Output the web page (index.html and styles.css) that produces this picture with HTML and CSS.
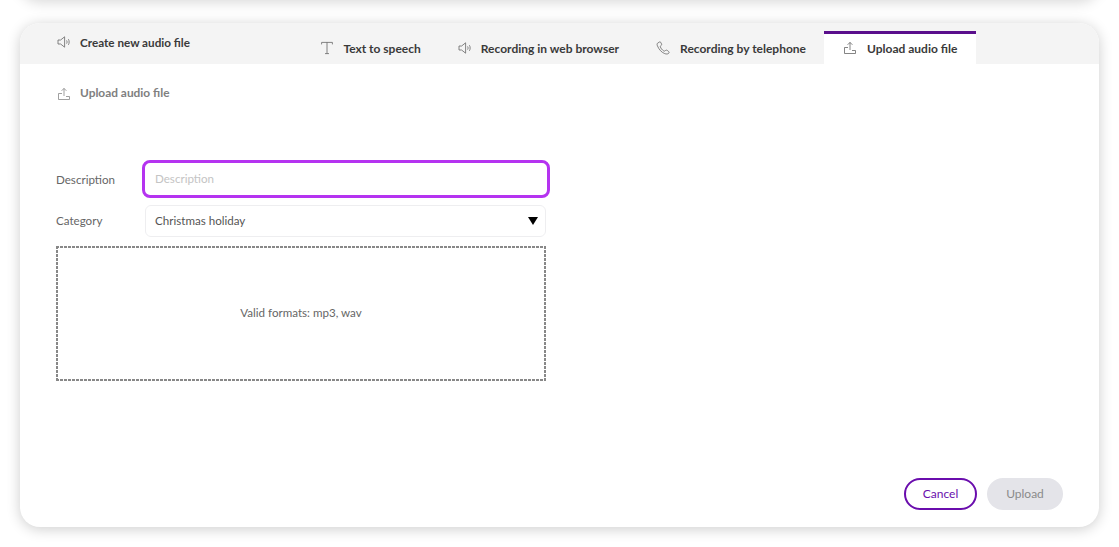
FILE: index.html
```html
<!DOCTYPE html>
<html lang="en">
<head>
<meta charset="utf-8">
<title>Upload audio file</title>
<link rel="stylesheet" href="styles.css">
</head>
<body>
<div class="prev-card"></div>
<main class="card">
  <header class="head">
    <div class="head-title">
      <svg class="icon" viewBox="0 0 14 14"><path d="M1 5h2.600L7.600 1.800v10.400L3.600 9H1z"/><path d="M9.600 5.400c.6 1 .6 2.200 0 3.200M11.400 4.200c1 1.600 1 4 0 5.600"/></svg>
      <span>Create new audio file</span>
    </div>
    <nav class="tabs">
      <a class="tab tab-text">
        <svg class="icon" viewBox="0 0 14 14"><path d="M1.600 3.400V1.400h10.800v2M7 1.400v11.200M5 12.600h4"/></svg>
        <span>Text to speech</span>
      </a>
      <a class="tab tab-web">
        <svg class="icon" viewBox="0 0 14 14"><path d="M1 5h2.600L7.600 1.800v10.400L3.600 9H1z"/><path d="M9.600 5.400c.6 1 .6 2.200 0 3.200M11.400 4.200c1 1.600 1 4 0 5.600"/></svg>
        <span>Recording in web browser</span>
      </a>
      <a class="tab tab-phone">
        <svg class="icon" viewBox="0 0 14 14"><path d="M3.400 1 1.600 2.200C.9 2.800 1 3.800 1.500 5c1.400 3.400 4 6.400 7.200 7.600 1.400.5 3 .6 3.900-.2.700-.6.600-1.400 0-1.900l-1.200-1c-.6-.5-1.300-.5-1.900 0l-.5.400c-.4.300-.9.300-1.300 0C6.200 9 5 7.500 4.400 6c-.2-.5-.1-.9.300-1.200l.5-.4c.5-.4.600-1 .3-1.500L4.700 1.300C4.400.8 3.800.7 3.400 1z"/></svg>
        <span>Recording by telephone</span>
      </a>
      <a class="tab tab-active">
        <svg class="icon" viewBox="0 0 14 14"><path d="M7 9V1.400M4.600 3.800 7 1.400l2.400 2.400M5 6.500H1.500v6h11v-3H9"/></svg>
        <span>Upload audio file</span>
      </a>
    </nav>
  </header>
  <section class="body">
    <div class="sub-title">
      <svg class="icon icon-muted" viewBox="0 0 14 14"><path d="M7 9V1.400M4.600 3.800 7 1.400l2.400 2.400M5 6.500H1.500v6h11v-3H9"/></svg>
      <span class="sub-text">Upload audio file</span>
    </div>
    <form class="form">
      <div class="row row-desc">
        <label class="label" for="desc">Description</label>
        <input class="field field-focus" id="desc" type="text" placeholder="Description">
      </div>
      <div class="row row-cat">
        <span class="label label-cat">Category</span>
        <div class="field select">
          <span class="select-value">Christmas holiday</span>
          <svg class="caret" viewBox="0 0 10 8"><path d="M0 0h10L5 8z"/></svg>
        </div>
      </div>
      <div class="drop">Valid formats: mp3, wav</div>
    </form>
    <div class="actions">
      <button class="btn btn-cancel" type="button">Cancel</button>
      <button class="btn btn-upload" type="button">Upload</button>
    </div>
  </section>
</main>
</body>
</html>
```
FILE: styles.css
```css
html, body { margin: 0; height: 100%; }
body {
  box-sizing: border-box;
  height: 547px;
  padding: 23px 20px 20px;
  background: #fff;
  overflow: hidden;
  font-family: "Lato", "Liberation Sans", sans-serif;
  font-size: 11.6px;
  color: #333;
  position: relative;
}
.prev-card {
  position: absolute;
  left: 20px;
  right: 20px;
  top: -40px;
  height: 40px;
  border-radius: 20px;
  box-shadow: 0 2px 14px rgba(0, 0, 0, .16);
}
.card {
  height: 504px;
  display: flex;
  flex-direction: column;
  border-radius: 20px;
  background: #fff;
  overflow: hidden;
  box-shadow: 0 2px 14px rgba(0, 0, 0, .2);
}
.head {
  height: 41px;
  flex: none;
  display: flex;
  justify-content: space-between;
  background: #f4f4f4;
  padding: 0 123px 0 37px;
}
.head-title {
  display: flex;
  align-items: center;
  gap: 9px;
  height: 41px;
  margin-top: -2px;
  font-size: 11.7px;
  font-weight: 700;
  color: #3a3a3a;
}
.icon {
  width: 14px;
  height: 14px;
  flex: none;
  fill: none;
  stroke: #666;
  stroke-width: .8;
}
.icon-muted { stroke: #888; }
.tabs { display: flex; align-items: flex-end; height: 41px; font-size: 12px; }
.tab {
  display: flex;
  align-items: center;
  gap: 9px;
  height: 33px;
  box-sizing: border-box;
  font-weight: 700;
  color: #3a3a3a;
  padding-top: 1px;
  white-space: nowrap;
}
.tab-web { margin-left: 37px; }
.tab-phone { margin-left: 37px; gap: 10px; }
.tab-active {
  margin-left: 18px;
  width: 152px;
  padding: 0 0 2px 19px;
  gap: 10px;
  background: #fff;
  border-top: 3px solid #5a0f8c;
}
.body {
  flex: 1;
  min-height: 0;
  display: flex;
  flex-direction: column;
  padding: 0 36px 17px;
}
.sub-title {
  display: flex;
  align-items: center;
  gap: 9px;
  height: 15px;
  margin-top: 22px;
  padding-left: 1px;
  font-size: 11.9px;
  font-weight: 700;
  color: #808080;
}
.sub-text { margin-bottom: 2px; }
.form { width: 490px; margin-top: 59px; }
.row { display: flex; align-items: center; }
.row-desc { height: 38px; }
.row-cat { height: 32px; margin-top: 7px; }
.label { width: 89px; flex: none; color: #666; }
.label-cat { padding-bottom: 2px; }
.field {
  flex: 1;
  min-width: 0;
  box-sizing: border-box;
  height: 32px;
  border: 1px solid #eeeef0;
  border-radius: 6px;
  background: #fff;
  padding: 0 9px;
  font: inherit;
  color: #555;
}
.field-focus {
  height: 38px;
  margin: 0 -4px 0 -3px;
  padding: 0 10px 2px;
  border: 3px solid #b533f0;
  border-radius: 8px;
  outline: none;
}
.field-focus::placeholder { color: #c4c4c4; opacity: 1; }
.select { display: flex; align-items: center; justify-content: space-between; }
.select-value { margin-bottom: 2px; }
.caret { width: 10px; height: 8px; margin-right: -2px; fill: #000; }
.drop {
  box-sizing: border-box;
  height: 135px;
  margin-top: 9px;
  padding-bottom: 2px;
  display: flex;
  align-items: center;
  justify-content: center;
  color: #666;
  background:
    repeating-linear-gradient(90deg, #888 0 3px, transparent 3px 4px) top / 100% 2px no-repeat,
    repeating-linear-gradient(90deg, #888 0 3px, transparent 3px 4px) bottom / 100% 2px no-repeat,
    repeating-linear-gradient(180deg, #888 0 3px, transparent 3px 4px) left / 2px 100% no-repeat,
    repeating-linear-gradient(180deg, #888 0 3px, transparent 3px 4px) right / 2px 100% no-repeat;
}
.actions {
  margin-top: auto;
  display: flex;
  justify-content: flex-end;
  gap: 10px;
}
.btn {
  height: 32px;
  box-sizing: border-box;
  border-radius: 16px;
  font: inherit;
  font-size: 12px;
  padding: 0 0 2px;
}
.btn-cancel {
  width: 73px;
  background: #fff;
  border: 2px solid #6a0dad;
  color: #6a0dad;
}
.btn-upload {
  width: 76px;
  background: #e4e4e9;
  border: 0;
  color: #8a8a8a;
}
```
